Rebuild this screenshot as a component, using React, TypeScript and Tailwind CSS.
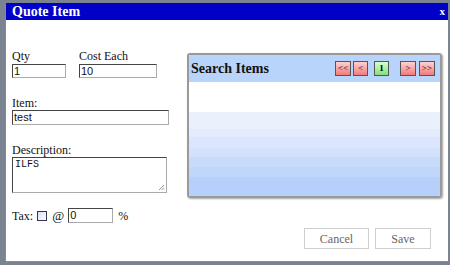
import React from 'react';

const serif = { fontFamily: '"Liberation Serif", "Times New Roman", serif' };

function PageButton({ label, active }: { label: string; active?: boolean }) {
  return <div className={`h-[15px] flex items-center justify-center border border-[#555] text-[9px] font-bold leading-none ${active ? 'bg-gradient-to-b from-[#d8ffd0] to-[#7fe07a] text-black' : 'bg-gradient-to-b from-[#ffd0d0] to-[#f07a7a] text-[#333]'}`} style={serif}>
      {label}
    </div>;
}

export default function App() {
  const bands = ['#ffffff', '#eaf0fc', '#e3ecfd', '#dbe6fc', '#d2e1fc', '#c9dbfb', '#c0d6fb', '#b6d0fb'];
  const bandHeights = ['h-[30px]', 'h-[17px]', 'h-[8px]', 'h-[11px]', 'h-[9px]', 'h-[10px]', 'h-[10px]', 'h-[19px]'];
  return <div className="w-[450px] h-[265px] bg-[#7b8391] pt-[3px] pl-[5px] overflow-hidden">
      <div className="w-[443px] h-[259px] bg-white border-l border-b border-[#8a8a8a] flex flex-col">
        <div className="h-[17px] bg-[#0000c8] flex items-center justify-between pl-[6px] pr-[3px] text-white font-bold" style={serif}>
          <span className="text-[14px] leading-none">Quote Item</span>
          <span className="text-[11px] leading-none">x</span>
        </div>
        <div className="flex text-[12px] text-[#111]" style={serif}>
          <div className="pl-[6px] w-[178px] flex flex-col">
            <div className="flex gap-[13px] mt-[29px]">
              <div className="flex flex-col">
                <span className="leading-[14px]">Qty</span>
                <div className="mt-[1px] w-[54px] h-[14px] border border-[#444] border-r-[#aaa] border-b-[#aaa] text-[11px] leading-[12px] pl-[1px]" style={{ fontFamily: '"Liberation Sans", Arial, sans-serif' }}>1</div>
              </div>
              <div className="flex flex-col">
                <span className="leading-[14px]">Cost Each</span>
                <div className="mt-[1px] w-[78px] h-[14px] border border-[#444] border-r-[#aaa] border-b-[#aaa] text-[11px] leading-[12px] pl-[1px]" style={{ fontFamily: '"Liberation Sans", Arial, sans-serif' }}>10</div>
              </div>
            </div>
            <span className="mt-[18px] leading-[14px]">Item:</span>
            <div className="mt-[0px] w-[157px] h-[15px] border border-[#444] border-r-[#aaa] border-b-[#aaa] text-[11px] leading-[13px] pl-[1px]" style={{ fontFamily: '"Liberation Sans", Arial, sans-serif' }}>test</div>
            <span className="mt-[18px] leading-[14px]">Description:</span>
            <div className="relative w-[155px] h-[36px] border border-[#444] border-r-[#aaa] border-b-[#aaa] text-[10px] leading-[12px] pl-[2px] pt-[1px]" style={{ fontFamily: '"Liberation Mono", "Courier New", monospace' }}>
              ILFS
              <svg className="absolute right-[1px] bottom-[1px]" width="7" height="7" viewBox="0 0 7 7">
                <path d="M6 1 L1 6 M6 3.5 L3.5 6 M6 5.5 L5.5 6" stroke="#999" strokeWidth="1" />
              </svg>
            </div>
            <div className="mt-[15px] flex items-center h-[15px]">
              <span>Tax:</span>
              <div className="ml-[4px] w-[10px] h-[10px] border border-[#335] bg-gradient-to-br from-[#dde] to-white" />
              <span className="ml-[5px] text-[13px]">@</span>
              <div className="ml-[4px] w-[45px] h-[15px] border border-[#444] border-r-[#aaa] border-b-[#aaa] text-[11px] leading-[13px] pl-[1px]" style={{ fontFamily: '"Liberation Sans", Arial, sans-serif' }}>0</div>
              <span className="ml-[5px]">%</span>
            </div>
          </div>
          <div className="flex flex-col">
            <div className="mt-[33px] ml-[3px] w-[255px] h-[145px] border-2 border-[#9a9a9a] rounded-[3px] shadow-[1px_1px_2px_rgba(0,0,0,0.35)] flex flex-col overflow-hidden">
              <div className="h-[27px] bg-[#b9d4fa] flex items-center justify-between pl-[2px] pr-[5px]">
                <span className="text-[14px] font-bold leading-none">Search Items</span>
                <div className="flex items-center">
                  <div className="w-[16px]"><PageButton label="<<" /></div>
                  <div className="w-[15px] ml-[2px]"><PageButton label="<" /></div>
                  <div className="w-[15px] ml-[6px]"><PageButton label="1" active /></div>
                  <div className="w-[16px] ml-[11px]"><PageButton label=">" /></div>
                  <div className="w-[16px] ml-[3px]"><PageButton label=">>" /></div>
                </div>
              </div>
              {bands.map((c, i) => <div key={i} className={bandHeights[i]} style={{ background: c }} />)}
            </div>
            <div className="mt-[30px] ml-[120px] flex gap-[6px]">
              <div className="w-[65px] h-[21px] border border-[#cfcfcf] flex items-center justify-center text-[#666] text-[12px]">Cancel</div>
              <div className="w-[56px] h-[21px] border border-[#cfcfcf] flex items-center justify-center text-[#666] text-[12px]">Save</div>
            </div>
          </div>
        </div>
      </div>
    </div>;
}
